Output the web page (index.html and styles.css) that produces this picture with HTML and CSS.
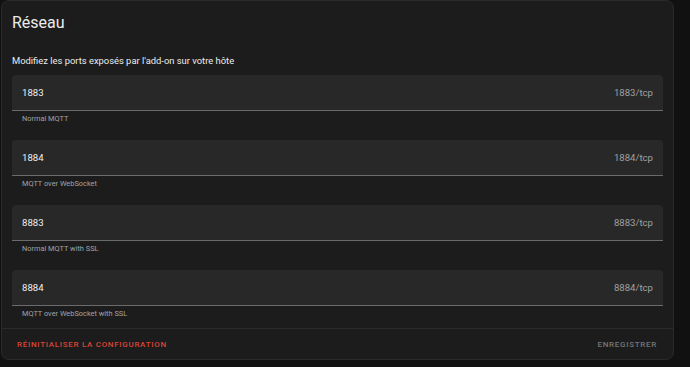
FILE: index.html
```html
<!DOCTYPE html>
<html lang="fr">
<head>
<meta charset="UTF-8">
<meta name="viewport" content="width=device-width, initial-scale=1.0">
<title>Réseau</title>
<link rel="stylesheet" href="styles.css">
</head>
<body>

<div class="card">
  <div class="card-content">
    <h1 class="card-title">Réseau</h1>
    <p class="description">Modifiez les ports exposés par l'add-on sur votre hôte</p>

    <div class="port-field">
      <div class="field-box">
        <span class="field-value">1883</span>
        <span class="field-suffix">1883/tcp</span>
      </div>
      <div class="field-helper">Normal MQTT</div>
    </div>

    <div class="port-field">
      <div class="field-box">
        <span class="field-value">1884</span>
        <span class="field-suffix">1884/tcp</span>
      </div>
      <div class="field-helper">MQTT over WebSocket</div>
    </div>

    <div class="port-field">
      <div class="field-box">
        <span class="field-value">8883</span>
        <span class="field-suffix">8883/tcp</span>
      </div>
      <div class="field-helper">Normal MQTT with SSL</div>
    </div>

    <div class="port-field">
      <div class="field-box">
        <span class="field-value">8884</span>
        <span class="field-suffix">8884/tcp</span>
      </div>
      <div class="field-helper">MQTT over WebSocket with SSL</div>
    </div>
  </div>

  <div class="card-actions">
    <button class="btn btn-reset">Réinitialiser la configuration</button>
    <button class="btn btn-save">Enregistrer</button>
  </div>
</div>

</body>
</html>
```

FILE: styles.css
```css
body {
  margin: 0;
  padding: 0;
  background-color: #111111;
  font-family: Roboto, "Noto Sans", sans-serif;
  color: #e1e1e1;
}

.card {
  margin-left: 1px;
  width: 673px;
  height: 360px;
  box-sizing: border-box;
  background-color: #1c1c1c;
  border: 1px solid #2a2a2a;
  border-radius: 8px;
  display: flex;
  flex-direction: column;
}

.card-content {
  padding: 10px 10px 0 10px;
  flex: 1;
}

.card-title {
  margin: 0;
  font-size: 16px;
  font-weight: 400;
  line-height: 24px;
  color: #ececec;
}

.description {
  margin: 19px 0 7px 0;
  font-size: 9.4px;
  line-height: 14px;
  color: #ececec;
}

.port-field {
  margin-bottom: 15px;
}

.port-field:last-child {
  margin-bottom: 8px;
}

.field-box {
  height: 36px;
  box-sizing: border-box;
  padding: 11px 10px 0 10px;
  background-color: #282828;
  border-bottom: 1px solid #6b6b6b;
  border-radius: 4px 4px 0 0;
  display: flex;
  justify-content: space-between;
  font-size: 9.6px;
  line-height: 14px;
}

.field-value {
  color: #f0f0f0;
}

.field-suffix {
  color: #a0a0a0;
}

.field-helper {
  padding: 2px 10px 0 10px;
  font-size: 7.4px;
  line-height: 12px;
  color: #a3a3a3;
}

.card-actions {
  height: 30px;
  border-top: 1px solid #2a2a2a;
  padding: 0 16px 0 15px;
  display: flex;
  justify-content: space-between;
  align-items: center;
}

.btn {
  background: none;
  border: none;
  padding: 0;
  font-family: Roboto, "Noto Sans", sans-serif;
  font-size: 8px;
  font-weight: 500;
  letter-spacing: 0.7px;
  text-transform: uppercase;
}

.btn-reset {
  color: #db4437;
}

.btn-save {
  color: #777777;
}
```
